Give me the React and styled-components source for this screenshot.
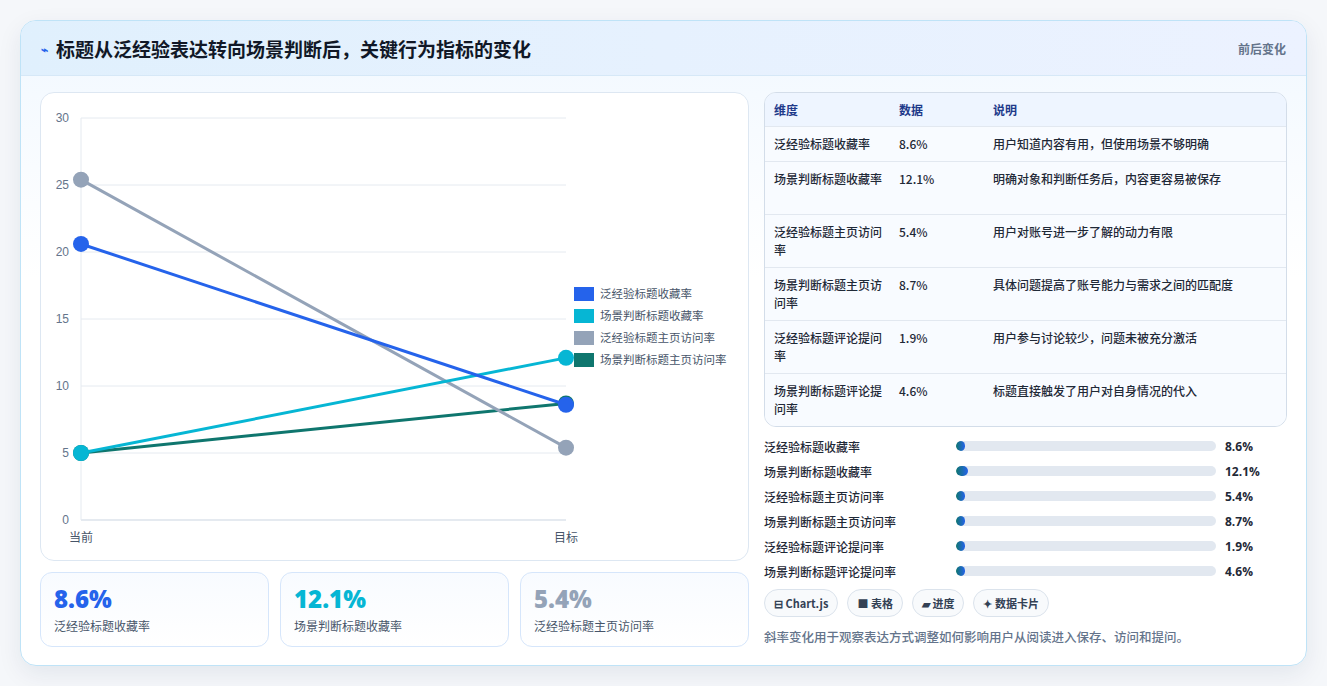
import React from "react";
import styled, { createGlobalStyle } from "styled-components";

const G = createGlobalStyle`
  body{margin:0;background:#f5f7fa;font-family:"Noto Sans CJK SC","Noto Sans",sans-serif;}
`;
const Page = styled.div`padding:20px 20px 20px 20px;width:1327px;box-sizing:border-box;`;
const Card = styled.div`width:1287px;height:646px;box-sizing:border-box;border:1px solid #bfe3f7;border-radius:16px;background:linear-gradient(180deg,#f1f8ff,#fff 40%);box-shadow:0 8px 24px rgba(15,40,80,.08);overflow:hidden;display:flex;flex-direction:column;`;
const Header = styled.div`height:55px;flex:none;box-sizing:border-box;border-bottom:1px solid #d6e8f7;background:linear-gradient(90deg,#e0f0fd,#ecf2ff);display:flex;align-items:center;justify-content:space-between;padding:0 20px;`;
const Title = styled.h1`margin:0;font-size:19px;font-weight:700;color:#111827;display:flex;align-items:center;gap:8px;`;
const Tag = styled.span`font-size:12px;font-weight:700;color:#64748b;`;
const Body = styled.div`display:flex;gap:15px;padding:16px 19px 0 19px;`;
const Left = styled.div`width:709px;display:flex;flex-direction:column;gap:11px;`;
const ChartBox = styled.div`height:469px;box-sizing:border-box;border:1px solid #dde7f2;border-radius:14px;background:#fff;`;
const Stats = styled.div`display:flex;gap:11px;`;
const Stat = styled.div`flex:1;height:75px;box-sizing:border-box;border:1px solid #d6e6fb;border-radius:12px;background:linear-gradient(180deg,#f8fbff,#fff);padding:10px 13px;`;
const StatVal = styled.div`font-family:"Open Sans",sans-serif;font-size:24px;font-weight:800;color:${p=>p.c};line-height:32px;`;
const StatLbl = styled.div`font-size:12px;color:#475569;margin-top:2px;`;
const Right = styled.div`width:524px;display:flex;flex-direction:column;`;
const Table = styled.div`border:1px solid #d3dde9;border-radius:12px;overflow:hidden;background:#f8fbff;`;
const Row = styled.div`display:grid;grid-template-columns:125px 94px 1fr;padding:0 0 0 9px;border-top:${p=>p.h?"none":"1px solid #e2e8f0"};background:${p=>p.h?"#eef5ff":"#f8fbff"};height:${p=>p.ht}px;box-sizing:border-box;padding-top:8px;font-size:12px;line-height:18px;color:${p=>p.h?"#1e3a8a":"#1f2937"};font-weight:${p=>p.h?600:500};`;
const Cell = styled.div`padding-right:14px;`;
const Bars = styled.div`display:flex;flex-direction:column;gap:7px;margin-top:10px;`;
const BarRow = styled.div`display:grid;grid-template-columns:183px 260px 1fr;align-items:center;column-gap:9px;height:18px;font-size:12px;color:#1f2937;font-weight:500;`;
const Track = styled.div`height:10px;border-radius:5px;background:#e2e8f0;overflow:hidden;`;
const Fill = styled.div`height:100%;border-radius:5px;background:linear-gradient(90deg,#0f766e,#2563eb);`;
const Val = styled.div`font-weight:700;color:#1f2937;font-family:"Open Sans",sans-serif;`;
const Chips = styled.div`display:flex;gap:9px;margin-top:9px;`;
const Chip = styled.div`height:28px;box-sizing:border-box;border:1px solid #dbe3ec;border-radius:14px;background:#f8fafc;padding:0 9px;display:flex;align-items:center;gap:4px;font-size:11px;font-weight:600;color:#334155;`;
const Note = styled.p`margin:10px 0 0;font-size:12.5px;color:#64748b;font-weight:500;`;

const Y=v=>519-v*13.4-92, X0=80-40, X1=565-40;
const series=[["泛经验标题收藏率","#2563eb",20.6,8.6],["场景判断标题收藏率","#06b6d4",5,12.1],["泛经验标题主页访问率","#94a3b8",25.4,5.4],["场景判断标题主页访问率","#0f766e",5,8.7]];
const drawOrder=[3,2,1,0];
function Chart(){
  return <svg width="707" height="467" style={{display:"block"}}>
    {[0,5,10,15,20,25,30].map(v=><g key={v}>
      <line x1={X0} x2={X1} y1={Y(v)} y2={Y(v)} stroke={v===0?"#cbd5e1":"#e5eaf0"}/>
      <text x={X0-12} y={Y(v)+4} fontSize="12" fill="#64748b" textAnchor="end" fontFamily="Liberation Sans">{v}</text></g>)}
    <line x1={X0} x2={X0} y1={Y(30)} y2={Y(0)} stroke="#e5eaf0"/>
    <text x={X0} y={Y(0)+22} fontSize="12" fill="#475569" textAnchor="middle" fontFamily="Noto Sans CJK SC">当前</text>
    <text x={X1} y={Y(0)+22} fontSize="12" fill="#475569" textAnchor="middle" fontFamily="Noto Sans CJK SC">目标</text>
    {drawOrder.map(i=>{const [n,c,a,b]=series[i];return <g key={n}><line x1={X0} y1={Y(a)} x2={X1} y2={Y(b)} stroke={c} strokeWidth="3"/>
      <circle cx={X0} cy={Y(a)} r="8" fill={c}/><circle cx={X1} cy={Y(b)} r="8" fill={c}/></g>;})}
    {series.map(([n,c],i)=><g key={n}><rect x="533" y={194+i*22} width="20" height="14" fill={c}/>
      <text x="559" y={205+i*22} fontSize="11.5" fill="#475569" fontFamily="Noto Sans CJK SC">{n}</text></g>)}
  </svg>;
}
const rows=[["泛经验标题收藏率","8.6%","用户知道内容有用，但使用场景不够明确",35],["场景判断标题收藏率","12.1%","明确对象和判断任务后，内容更容易被保存",53],["泛经验标题主页访问率","5.4%","用户对账号进一步了解的动力有限",53],["场景判断标题主页访问率","8.7%","具体问题提高了账号能力与需求之间的匹配度",53],["泛经验标题评论提问率","1.9%","用户参与讨论较少，问题未被充分激活",53],["场景判断标题评论提问率","4.6%","标题直接触发了用户对自身情况的代入",53]];
export default function App(){
  return <Page><G/><Card>
    <Header><Title><span style={{color:"#2563eb",fontSize:12}}>⌁</span>标题从泛经验表达转向场景判断后，关键行为指标的变化</Title><Tag>前后变化</Tag></Header>
    <Body>
      <Left>
        <ChartBox><Chart/></ChartBox>
        <Stats>
          <Stat><StatVal c="#2563eb">8.6%</StatVal><StatLbl>泛经验标题收藏率</StatLbl></Stat>
          <Stat><StatVal c="#06b6d4">12.1%</StatVal><StatLbl>场景判断标题收藏率</StatLbl></Stat>
          <Stat><StatVal c="#94a3b8">5.4%</StatVal><StatLbl>泛经验标题主页访问率</StatLbl></Stat>
        </Stats>
      </Left>
      <Right>
        <Table>
          <Row h ht={33}><Cell>维度</Cell><Cell>数据</Cell><Cell>说明</Cell></Row>
          {rows.map(r=><Row key={r[0]} ht={r[3]}><Cell>{r[0]}</Cell><Cell>{r[1]}</Cell><Cell>{r[2]}</Cell></Row>)}
        </Table>
        <Bars>
          {rows.map(r=><BarRow key={r[0]}><div>{r[0]}</div><Track><Fill style={{width:parseFloat(r[1])>10?12:9}}/></Track><Val>{r[1]}</Val></BarRow>)}
        </Bars>
        <Chips><Chip>⊟ Chart.js</Chip><Chip>■ 表格</Chip><Chip>▰ 进度</Chip><Chip>✦ 数据卡片</Chip></Chips>
        <Note>斜率变化用于观察表达方式调整如何影响用户从阅读进入保存、访问和提问。</Note>
      </Right>
    </Body>
  </Card></Page>;
}
